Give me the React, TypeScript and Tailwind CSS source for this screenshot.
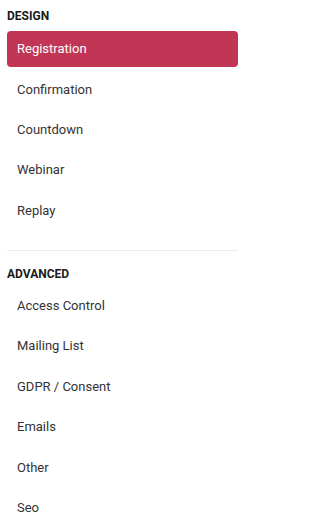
const design = ["Registration", "Confirmation", "Countdown", "Webinar", "Replay"];
const advanced = ["Access Control", "Mailing List", "GDPR / Consent", "Emails", "Other", "Seo"];

function Heading({ title }: { title: string }) {
    return <div className="h-4 text-[12px] leading-4 font-bold uppercase text-[#1a1a1a]">{title}</div>;
}

function Item({ label, active }: { label: string; active?: boolean }) {
    return (
        <div
            className={
                active
                    ? "h-9 flex items-center px-[10px] rounded-[4px] bg-[#c13655] text-white text-[13px]"
                    : "h-9 flex items-center px-[10px] rounded-[4px] text-[#333333] text-[13px]"
            }
        >
            {label}
        </div>
    );
}

export default function App() {
    return (
        <div className="w-[245px] min-h-[525px] bg-white px-[7px] pt-[8px] font-['Roboto',sans-serif]">
            <Heading title="Design" />
            <div className="mt-[7px] flex flex-col gap-[4.4px]">
                {design.map((d, i) => (
                    <Item key={d} label={d} active={i === 0} />
                ))}
            </div>
            <div className="mt-[21px] border-t border-[#ebebeb]" />
            <div className="mt-[15px]">
                <Heading title="Advanced" />
            </div>
            <div className="mt-[6px] flex flex-col gap-[4.5px]">
                {advanced.map((a) => (
                    <Item key={a} label={a} />
                ))}
            </div>
        </div>
    );
}
